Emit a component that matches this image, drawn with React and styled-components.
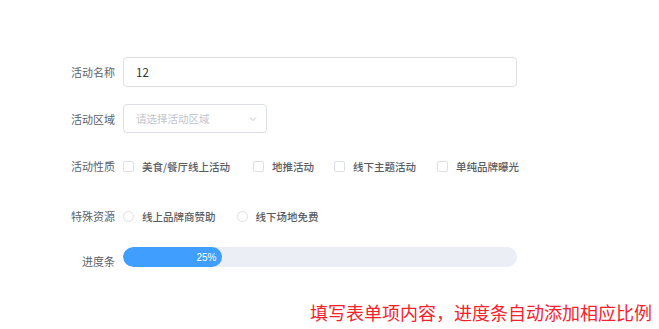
import React from "react";
import styled, { createGlobalStyle } from "styled-components";

const Global = createGlobalStyle`
  html, body { margin: 0; padding: 0; background: #fff; }
  body { font-family: "Noto Sans CJK SC", "Noto Sans", sans-serif; color: #606266; }
  * { box-sizing: border-box; }
`;

const Page = styled.div`
  width: 659px;
  height: 329px;
  display: flex;
  flex-direction: column;
  padding-top: 57px;
`;

const Form = styled.div`
  display: flex;
  flex-direction: column;
  width: 517px;
`;

const Row = styled.div`
  display: flex;
  align-items: ${(p) => p.$align || "center"};
  height: ${(p) => p.$h}px;
  margin-bottom: ${(p) => p.$mb || 0}px;
`;

const Label = styled.div`
  width: 123px;
  padding-right: 8px;
  text-align: right;
  font-size: 11px;
  line-height: 14px;
  color: #606266;
  flex-shrink: 0;
  white-space: nowrap;
  padding-top: ${(p) => p.$pt || 0}px;
`;

const Input = styled.div`
  flex: 1;
  height: 30px;
  border: 1px solid #dcdfe6;
  border-radius: 4px;
  display: flex;
  align-items: center;
  padding: 0 12px;
  font-size: 11.5px;
  color: #303133;
`;

const Select = styled.div`
  width: 144px;
  height: 29px;
  border: 1px solid #dcdfe6;
  border-radius: 4px;
  display: flex;
  align-items: center;
  justify-content: space-between;
  padding: 0 8px 0 12px;
  font-size: 10.5px;
  color: #c0c4cc;
`;

const Group = styled.div`
  display: flex;
  align-items: center;
  flex-shrink: 0;
`;

const Option = styled.label`
  display: flex;
  align-items: center;
  flex-shrink: 0;
  white-space: nowrap;
  margin-right: ${(p) => p.$mr}px;
  font-size: 10.5px;
  font-weight: 500;
  color: #5a5c61;
`;

const Box = styled.span`
  width: 11px;
  height: 11px;
  border: 1px solid #dcdfe6;
  border-radius: ${(p) => (p.$round ? "50%" : "2px")};
  background: #fff;
  margin-right: 8px;
  flex-shrink: 0;
`;

const Track = styled.div`
  flex: 1;
  height: 20px;
  border-radius: 10px;
  background: #ebeef5;
  overflow: hidden;
  display: flex;
`;

const Fill = styled.div`
  height: 100%;
  border-radius: 10px;
  background: #409eff;
  display: flex;
  align-items: center;
  justify-content: flex-end;
  padding-right: 5px;
  font-family: "Liberation Sans", Arial, sans-serif;
  font-size: 10px;
  color: #fff;
`;

const Note = styled.div`
  margin-top: 33px;
  padding-right: 7px;
  text-align: right;
  font-size: 18px;
  line-height: 24px;
  color: #f5222d;
`;

const Chevron = () => (
  <svg width="10" height="10" viewBox="0 0 10 10">
    <path d="M2 3.5 L5 6.5 L8 3.5" fill="none" stroke="#c0c4cc" strokeWidth="1" />
  </svg>
);

const types = [
  { t: "美食/餐厅线上活动", mr: 23 },
  { t: "地推活动", mr: 20 },
  { t: "线下主题活动", mr: 21 },
  { t: "单纯品牌曝光", mr: 0 },
];
const res = [
  { t: "线上品牌商赞助", mr: 21 },
  { t: "线下场地免费", mr: 0 },
];

export default function App() {
  const pct = 25;
  return (
    <Page>
      <Global />
      <Form>
        <Row $h={30} $mb={17}>
          <Label>活动名称</Label>
          <Input>12</Input>
        </Row>
        <Row $h={29} $mb={19}>
          <Label>活动区域</Label>
          <Select>
            <span>请选择活动区域</span>
            <Chevron />
          </Select>
        </Row>
        <Row $h={28} $mb={22}>
          <Label>活动性质</Label>
          <Group>
            {types.map((o) => (
              <Option key={o.t} $mr={o.mr}>
                <Box />
                {o.t}
              </Option>
            ))}
          </Group>
        </Row>
        <Row $h={28} $mb={17}>
          <Label>特殊资源</Label>
          <Group>
            {res.map((o) => (
              <Option key={o.t} $mr={o.mr}>
                <Box $round />
                {o.t}
              </Option>
            ))}
          </Group>
        </Row>
        <Row $h={20} $align="flex-start">
          <Label $pt={7}>进度条</Label>
          <Track>
            <Fill style={{ width: `${pct}%` }}>{pct}%</Fill>
          </Track>
        </Row>
      </Form>
      <Note>填写表单项内容，进度条自动添加相应比例</Note>
    </Page>
  );
}
